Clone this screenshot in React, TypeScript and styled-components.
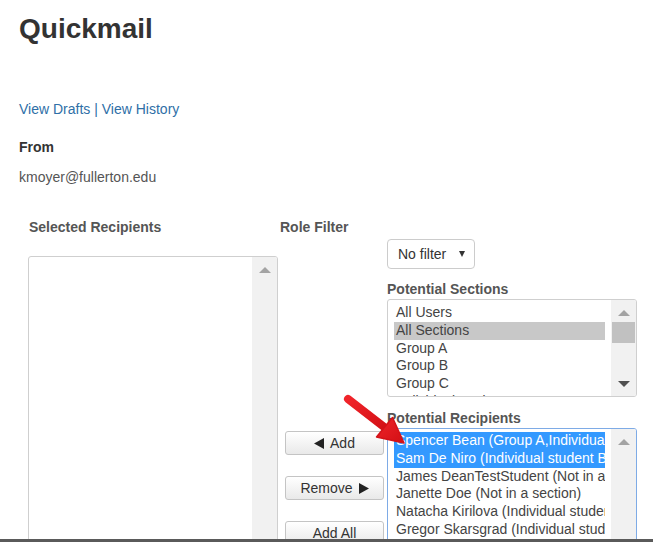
import React from 'react';
import styled, { createGlobalStyle } from 'styled-components';

const GlobalStyle = createGlobalStyle`
  body {
    margin: 0;
    background: #fff;
    font-family: "Liberation Sans", Arial, sans-serif;
    color: #333;
  }
`;

const Page = styled.div`
  position: relative;
  height: 542px;
  box-sizing: border-box;
  overflow: hidden;
  padding: 13px 19px 0;
  border-bottom: 3px solid #5a5a5a;
`;

const Title = styled.h1`
  margin: 0;
  font-size: 28px;
  line-height: 32px;
  font-weight: bold;
  color: #333;
`;

const Links = styled.div`
  margin-top: 54px;
  font-size: 14px;
  line-height: 20px;
  color: #2f6fa7;
`;

const Link = styled.a`
  color: #2f6fa7;
  text-decoration: none;
`;

const FieldLabel = styled.div`
  margin-top: 18px;
  font-size: 14px;
  line-height: 20px;
  font-weight: bold;
  color: #333;
`;

const FieldValue = styled.div`
  margin-top: 10px;
  font-size: 14px;
  line-height: 20px;
  color: #555;
`;

const Picker = styled.div`
  display: grid;
  grid-template-columns: 252px 107px 250px;
  row-gap: 2px;
  margin: 30px 0 0 9px;
`;

const ColumnLabel = styled.div<{ $indent?: number }>`
  font-size: 14px;
  line-height: 20px;
  font-weight: bold;
  color: #555;
  padding-left: ${(p) => p.$indent ?? 1}px;
`;

const Column = styled.div`
  display: flex;
  flex-direction: column;
  align-items: flex-start;
`;

const ButtonColumn = styled(Column)`
  padding: 192px 0 0 5px;
  gap: 21px;
`;

const ListBox = styled.div<{ $height: number; $focused?: boolean; $top?: number }>`
  display: flex;
  box-sizing: border-box;
  width: 250px;
  height: ${(p) => p.$height}px;
  margin-top: ${(p) => p.$top ?? 0}px;
  border: 1px solid ${(p) => (p.$focused ? '#7eabe6' : '#cfcfcf')};
  border-radius: 3px;
  overflow: hidden;
  background: #fff;
`;

const Options = styled.div`
  flex: 1;
  min-width: 0;
  padding: 3px 6px 0 6px;
  font-size: 14px;
  line-height: 17.8px;
  color: #444;
`;

const Option = styled.div<{ $selected?: 'active' | 'inactive' }>`
  padding-left: 2px;
  white-space: nowrap;
  overflow: hidden;
  background: ${(p) =>
    p.$selected === 'active' ? '#3399ff' : p.$selected === 'inactive' ? '#c8c8c8' : 'transparent'};
  color: ${(p) => (p.$selected === 'active' ? '#fff' : '#444')};
`;

const Track = styled.div`
  position: relative;
  width: 25px;
  flex: none;
  background: #f1f1f1;
`;

const Arrow = styled.div<{ $dir: 'up' | 'down'; $dark?: boolean }>`
  width: 0;
  height: 0;
  margin: ${(p) => (p.$dir === 'up' ? '10px auto 0' : '0 auto 9px')};
  border-left: 6px solid transparent;
  border-right: 6px solid transparent;
  ${(p) =>
    p.$dir === 'up'
      ? `border-bottom: 6px solid ${p.$dark ? '#505050' : '#a3a3a3'};`
      : `border-top: 6px solid ${p.$dark ? '#505050' : '#a3a3a3'};`}
`;

const ScrollTrack = styled(Track)`
  display: flex;
  flex-direction: column;
`;

const Thumb = styled.div`
  margin: 6px 0 0 1px;
  width: 23px;
  height: 21px;
  background: #c1c1c1;
`;

const Spacer = styled.div`
  flex: 1;
`;

const Select = styled.div`
  display: flex;
  align-items: center;
  justify-content: space-between;
  box-sizing: border-box;
  width: 88px;
  height: 30px;
  padding: 0 9px 0 10px;
  border: 1px solid #cccccc;
  border-radius: 4px;
  font-size: 14px;
  color: #333;
`;

const Caret = styled.span`
  width: 0;
  height: 0;
  border-left: 3.5px solid transparent;
  border-right: 3.5px solid transparent;
  border-top: 6px solid #333;
`;

const SectionLabel = styled(ColumnLabel)<{ $gap: number }>`
  margin-top: ${(p) => p.$gap}px;
  padding-left: 0;
`;

const Button = styled.button`
  display: flex;
  align-items: center;
  justify-content: center;
  gap: 6px;
  box-sizing: border-box;
  width: 99px;
  height: 24px;
  padding: 0;
  border: 1px solid #c4c4c4;
  border-radius: 3px;
  background: linear-gradient(#ffffff, #e9e9e9);
  font-family: "Liberation Sans", Arial, sans-serif;
  font-size: 14px;
  color: #333;
`;

const Overlay = styled.svg`
  position: absolute;
  left: 0;
  top: 0;
  pointer-events: none;
`;

const Tri = ({ dir }: { dir: 'left' | 'right' }) => (
  <svg width="10" height="11" viewBox="0 0 10 11">
    <path d={dir === 'left' ? 'M10 0 L10 11 L0 5.5 Z' : 'M0 0 L0 11 L10 5.5 Z'} fill="#222" />
  </svg>
);

const sections = ['All Users', 'All Sections', 'Group A', 'Group B', 'Group C', 'Individual students'];

const recipients = [
  'Spencer Bean (Group A,Individual students)',
  'Sam De Niro (Individual student Bucket)',
  'James DeanTestStudent (Not in a section)',
  'Janette Doe (Not in a section)',
  'Natacha Kirilova (Individual students)',
  'Gregor Skarsgrad (Individual students)',
  'Someone Else (Not in a section)',
];

const App: React.FC = () => {
  return (
    <>
      <GlobalStyle />
      <Page>
        <Title>Quickmail</Title>
        <Links>
          <Link href="#">View Drafts</Link> | <Link href="#">View History</Link>
        </Links>
        <FieldLabel>From</FieldLabel>
        <FieldValue>kmoyer@fullerton.edu</FieldValue>

        <Picker>
          <ColumnLabel>Selected Recipients</ColumnLabel>
          <ColumnLabel $indent={0}>Role Filter</ColumnLabel>
          <div />

          <Column>
            <ListBox $height={310} $top={17}>
              <Options />
              <Track>
                <Arrow $dir="up" />
              </Track>
            </ListBox>
          </Column>

          <ButtonColumn>
            <Button>
              <Tri dir="left" />
              Add
            </Button>
            <Button>
              Remove
              <Tri dir="right" />
            </Button>
            <Button>Add All</Button>
          </ButtonColumn>

          <Column>
            <Select>
              No filter
              <Caret />
            </Select>
            <SectionLabel $gap={10}>Potential Sections</SectionLabel>
            <ListBox $height={98}>
              <Options style={{ paddingTop: 4 }}>
                {sections.map((s, i) => (
                  <Option key={s} $selected={i === 1 ? 'inactive' : undefined}>
                    {s}
                  </Option>
                ))}
              </Options>
              <ScrollTrack>
                <Arrow $dir="up" />
                <Thumb />
                <Spacer />
                <Arrow $dir="down" $dark />
              </ScrollTrack>
            </ListBox>
            <SectionLabel $gap={11}>Potential Recipients</SectionLabel>
            <ListBox $height={160} $focused>
              <Options>
                {recipients.map((r, i) => (
                  <Option key={r} $selected={i < 2 ? 'active' : undefined}>
                    {r}
                  </Option>
                ))}
              </Options>
              <Track>
                <Arrow $dir="up" />
              </Track>
            </ListBox>
          </Column>
        </Picker>

        <Overlay width="653" height="542" viewBox="0 0 653 542">
          <defs>
            <linearGradient id="red" x1="0" y1="0" x2="1" y2="1">
              <stop offset="0" stopColor="#f0242a" />
              <stop offset="1" stopColor="#d10f14" />
            </linearGradient>
          </defs>
          <line x1="348" y1="399" x2="388" y2="430" stroke="url(#red)" strokeWidth="8" strokeLinecap="round" />
          <path d="M404 443 L376.5 437 L392.5 417.5 Z" fill="url(#red)" stroke="#d31218" strokeWidth="1.5" strokeLinejoin="round" />
        </Overlay>
      </Page>
    </>
  );
};

export default App;
